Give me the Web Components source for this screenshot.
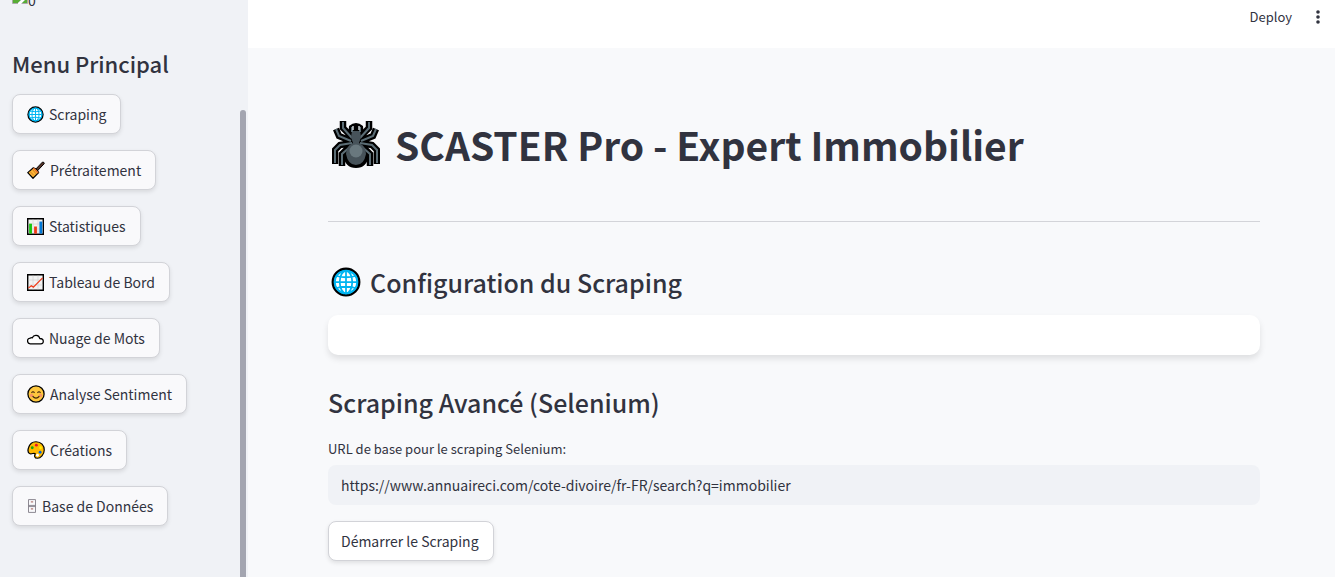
<!DOCTYPE html>
<html lang="fr">
<head>
<meta charset="utf-8">
<title>SCASTER Pro</title>
<style>
html,body{height:100%}
body{margin:0;background:#f8f9fb;color:#31333f;font:14px/24px "Noto Sans CJK SC","Source Sans Pro",sans-serif;overflow:hidden}
</style>
</head>
<body>
<scaster-app></scaster-app>
<script>
const ICONS = {
globe:'<circle cx="12" cy="12" r="10.7" fill="#00b5f1" stroke="#000" stroke-width="1.7"/><g fill="#fff"><circle cx="12" cy="12" r="8.6"/></g><g fill="none" stroke="#00b5f1" stroke-width="1.4"><circle cx="12" cy="12" r="9"/><ellipse cx="12" cy="12" rx="5" ry="9"/><path d="M12 3v18M3 12h18M4.500 7.200q7.500 2 15 0M4.500 16.800q7.500-2 15 0"/></g>',
broom:'<path d="m11.500 11 9-9.500q2.500-.5 2.500 2L14 13" fill="#563428" stroke="#000" stroke-width="1.300"/><path d="M8.500 9q5 1 7 6.500L8 23l-7-7.500Z" fill="#ffb636" stroke="#000" stroke-width="1.600" stroke-linejoin="round"/><path d="m4 14 5 5m-2-8 5 6" stroke="#c87b22" stroke-width="1.200"/><path d="m8.500 9.500 6.500 6.500" stroke="#e76828" stroke-width="1.800"/>',
bars:'<path d="M1 1h22v22H1z" fill="#f3f3f3" stroke="#000" stroke-width="2"/><path d="M8.500 2v20M15.500 2v20M2 8.500h20M2 15.500h20" stroke="#ccc" stroke-width=".8"/><path d="M3 8h4v14H3z" fill="#16c60c"/><path d="M10 12h4v10h-4z" fill="#f03a17"/><path d="M17.500 5h4v17h-4z" fill="#0078d7"/>',
chart:'<path d="M1 1h22v22H1z" fill="#f3f3f3" stroke="#000" stroke-width="2"/><path d="M8.500 2v20M15.500 2v20M2 8.500h20M2 15.500h20" stroke="#ccc" stroke-width=".8"/><path d="m2 20 4-3.500 3 2L22 5.500" fill="none" stroke="#f03a17" stroke-width="1.700"/>',
cloud:'<path d="M5 19.500a4 4 0 0 1-.5-8q1.500-1 3-.5a5.500 5.500 0 0 1 10.500 1q5 .2 5 4t-4 3.500Z" fill="#fff" stroke="#000" stroke-width="1.800"/>',
smile:'<circle cx="12" cy="12" r="10.800" fill="#ffc83d" stroke="#000" stroke-width="1.700"/><circle cx="6" cy="14" r="2.300" fill="#f79464"/><circle cx="18" cy="14" r="2.300" fill="#f79464"/><path d="M6 10.500q2-3 4 0m4 0q2-3 4 0M7.500 15q4.500 5 9 0" fill="none" stroke="#40270d" stroke-width="1.500"/>',
palette:'<path d="M12 1c7 0 11 5 11 11s-5 11-9 11c-5 0-4-4-3-6-2-2-4 1-7 0C1 16 1 12 2 9 3.500 4 7 1 12 1Z" fill="#ffb900" stroke="#000" stroke-width="1.600"/><circle cx="7" cy="9" r="1.900" fill="#16a60c"/><circle cx="12.500" cy="5.500" r="1.900" fill="#e81224"/><circle cx="18" cy="9" r="1.900" fill="#fff100"/><circle cx="17.500" cy="15" r="1.900" fill="#0063d8"/><circle cx="14" cy="19" r="1.900" fill="#fff"/>',
cabinet:'<g fill="none" stroke="#85818b" stroke-width="1.600"><path d="M2 1h12v22H2zM2 11h12M2 13h12"/><path d="M6 5h4m-4 12h4" stroke="#b37d78" stroke-width="2"/></g>',
spider:'<g fill="none" stroke="#000" stroke-width="6.500"><path d="M11 1v7l9 9M4 9l3 7 12 5M3 44V30l5-5 12-2M10 46V34l8-8M37 1v7l-9 9M44 9l-3 7-12 5M45 44V30l-5-5-12-2M38 46V34l-8-8"/></g><path d="M17 6q7-6 14 0l1 13v7q5 4 5 9-2 13-13 13T11 35q0-5 5-9v-7l1-13Z" fill="#000"/><g fill="none" stroke="#5b6d75" stroke-width="2"><path d="M11 2v6l9 10M4 9l3 7 12 5M3 43V30l5-5 12-2M10 45V34l9-8M37 2v6l-9 10M44 9l-3 7-12 5M45 43V30l-5-5-12-2M38 45V34l-9-8"/></g><path d="M20 11h8l1 6-2 6q7 3 7 11-2 11-10 11T14 34q0-8 7-11l-2-6 1-6Z" fill="#47535a"/><path d="M20 7v5m8-5v5" stroke="#5b6d75" stroke-width="2"/><path d="M21 6v4m6-4v4" stroke="#cbd1d4" stroke-width="1.500"/><circle cx="24" cy="31" r="6.500" fill="#69787e"/>'
};
function define(name, css, html, setup){
  customElements.define(name, class extends HTMLElement{
    connectedCallback(){
      if(this.shadowRoot) return;
      const t=document.createElement('template');
      t.innerHTML='<style>*{box-sizing:border-box}'+css+'</style>'+html;
      this.attachShadow({mode:'open'}).append(t.content.cloneNode(true));
      if(setup) setup(this,this.shadowRoot);
    }
  });
}
define('app-icon',':host{display:block;flex:none;width:17px;height:17px}svg{display:block;width:100%;height:100%}','<svg aria-hidden="true"></svg>',(h,r)=>{
  const s=r.querySelector('svg'), n=h.getAttribute('name');
  s.setAttribute('viewBox',n==='spider'?'0 0 48 48':n==='cabinet'?'0 0 16 24':'0 0 24 24');
  s.innerHTML=ICONS[n];
});
define('app-button',':host{display:block}button{display:flex;align-items:center;height:40px;padding:0 14px 0 12px;border:1px solid #d2d3d8;border-radius:8px;background:var(--button-bg,#f9f9fb);color:inherit;font:inherit;box-shadow:0 2px 4px rgba(0,0,0,.1);white-space:nowrap}','<button type="button"><slot name="icon"></slot><slot></slot></button>');
define('app-sidebar',`:host{display:grid;grid-template-columns:1fr 8px;background:#f0f2f6;overflow:hidden}
.logo{height:16px;display:flex;align-items:flex-end}
.logo svg{display:block;flex:none;margin-bottom:12px}.logo span{margin-bottom:4px}
.content{padding-left:12px}
h2{margin:31px 0 15px;font-size:22px;line-height:32px;font-weight:500}
nav{display:grid;gap:16px;justify-items:start}
app-icon{margin:0 5px 0 2px}.wide{width:18px;height:18px}.narrow{width:10px;height:14px}
.track{padding-top:110px;display:flex}.thumb{width:6px;background:#a3a5b0;border-radius:3px 3px 0 0}`,
`<div class="content"><div class="logo"><svg width="16" height="16" viewBox="0 0 16 16" role="img" aria-label="Logo"><path d="M.5 0v15.500h15V0" fill="#c4d9f5" stroke="#aaa"/><path d="M1 15v-4q5-3 9 0l-4 4Z" fill="#58ad35"/><path d="m6 15 8-7h2v1l-7 7H6Z" fill="#fff"/><path d="m10 15 5-5v5Z" fill="#58ad35"/></svg><span>0</span></div>
<h2>Menu Principal</h2><nav>
<app-button><app-icon slot="icon" name="globe"></app-icon>Scraping</app-button>
<app-button><app-icon slot="icon" name="broom" class="wide"></app-icon>Prétraitement</app-button>
<app-button><app-icon slot="icon" name="bars"></app-icon>Statistiques</app-button>
<app-button><app-icon slot="icon" name="chart"></app-icon>Tableau de Bord</app-button>
<app-button><app-icon slot="icon" name="cloud"></app-icon>Nuage de Mots</app-button>
<app-button><app-icon slot="icon" name="smile" class="wide"></app-icon>Analyse Sentiment</app-button>
<app-button><app-icon slot="icon" name="palette" class="wide"></app-icon>Créations</app-button>
<app-button><app-icon slot="icon" name="cabinet" class="narrow"></app-icon>Base de Données</app-button>
</nav></div><div class="track"><div class="thumb"></div></div>`);
define('app-header',`:host{display:flex;justify-content:flex-end;align-items:flex-start;height:48px;background:#fff;padding:5px 8px 0 0}
button{border:0;background:none;padding:0;color:inherit;font:inherit;font-size:13px}
.menu{width:18px;height:24px;margin-left:17px;display:grid;place-items:center}svg{display:block}`,
`<button type="button">Deploy</button><button type="button" class="menu" aria-label="Menu"><svg width="4" height="14" viewBox="0 0 4 14" fill="#31333f"><circle cx="2" cy="2" r="1.800"/><circle cx="2" cy="7" r="1.800"/><circle cx="2" cy="12" r="1.800"/></svg></button>`);
define('app-field',`:host{display:block}label{display:block;font-size:13px;line-height:20px;margin-bottom:6px}
input{display:block;width:100%;height:40px;border:0;border-radius:8px;padding:0 13px;background:#f0f2f6;color:inherit;font:inherit}`,
`<label for="url">URL de base pour le scraping Selenium:</label><input id="url" type="text" value="https://www.annuaireci.com/cote-divoire/fr-FR/search?q=immobilier">`);
define('app-main',`:host{display:block;padding:66px 75px 0 80px}
h1,h2{display:flex;align-items:center;margin:0}
h1{font-size:39px;line-height:60px;font-weight:700}h1 app-icon{width:48px;height:48px;margin:0 15px 0 4px}
h2{font-size:25px;line-height:40px;font-weight:500}h2 app-icon{width:30px;height:30px;margin:0 9px 0 3px}
hr{border:0;border-top:1px solid #d3d4d9;margin:47px 0 40px}
.card{height:40px;margin:13px 0 27px;background:#fff;border-radius:10px;box-shadow:0 4px 6px rgba(0,0,0,.1)}
app-field{margin:17px 0 16px}app-button{--button-bg:#fff}`,
`<h1><app-icon name="spider"></app-icon>SCASTER Pro - Expert Immobilier</h1><hr>
<h2><app-icon name="globe"></app-icon>Configuration du Scraping</h2><div class="card"></div>
<h2>Scraping Avancé (Selenium)</h2><app-field></app-field><app-button>Démarrer le Scraping</app-button>`);
define('scaster-app',`:host{display:grid;grid-template-columns:248px minmax(0,1fr);min-height:100vh}main{min-width:0}`,
`<app-sidebar></app-sidebar><main><app-header></app-header><app-main></app-main></main>`);
</script>
</body>
</html>
